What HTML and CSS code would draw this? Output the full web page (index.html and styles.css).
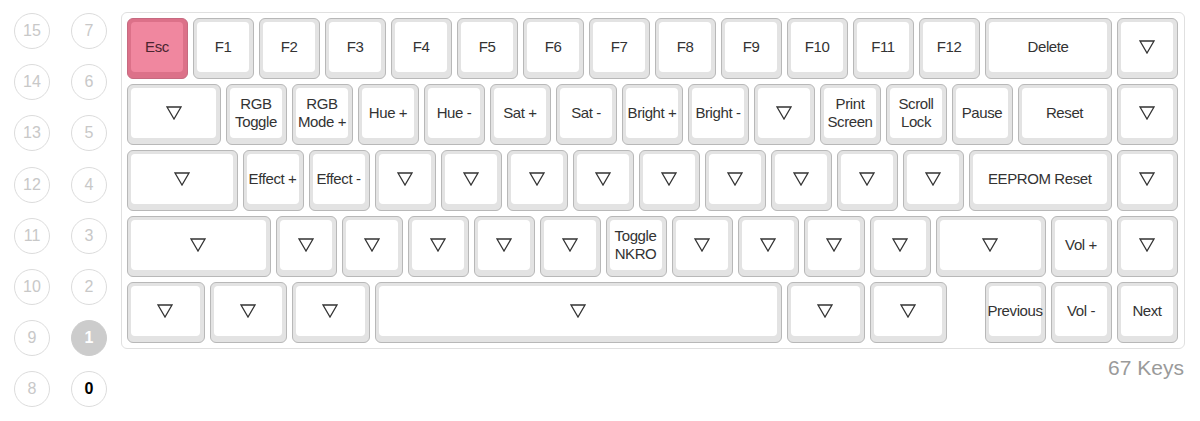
FILE: index.html
```html
<!DOCTYPE html>
<html>
<head>
<meta charset="utf-8">
<link rel="stylesheet" href="styles.css">
</head>
<body>
<div class="page">
  <div class="layers">
    <div class="layer">15</div><div class="layer">7</div>
    <div class="layer">14</div><div class="layer">6</div>
    <div class="layer">13</div><div class="layer">5</div>
    <div class="layer">12</div><div class="layer">4</div>
    <div class="layer">11</div><div class="layer">3</div>
    <div class="layer">10</div><div class="layer">2</div>
    <div class="layer">9</div><div class="layer active">1</div>
    <div class="layer">8</div><div class="layer current">0</div>
  </div>
  <div class="main">
    <div class="keyboard">
      <div class="row">
        <div class="key u1 esc"><div class="face">Esc</div></div>
        <div class="key u1"><div class="face">F1</div></div>
        <div class="key u1"><div class="face">F2</div></div>
        <div class="key u1"><div class="face">F3</div></div>
        <div class="key u1"><div class="face">F4</div></div>
        <div class="key u1"><div class="face">F5</div></div>
        <div class="key u1"><div class="face">F6</div></div>
        <div class="key u1"><div class="face">F7</div></div>
        <div class="key u1"><div class="face">F8</div></div>
        <div class="key u1"><div class="face">F9</div></div>
        <div class="key u1"><div class="face">F10</div></div>
        <div class="key u1"><div class="face">F11</div></div>
        <div class="key u1"><div class="face">F12</div></div>
        <div class="key u2"><div class="face">Delete</div></div>
        <div class="key u1 last"><div class="face"><svg class="tri" viewBox="0 0 16 14"><polygon points="1,1 15,1 8,13"/></svg></div></div>
      </div>
      <div class="row">
        <div class="key u150"><div class="face"><svg class="tri" viewBox="0 0 16 14"><polygon points="1,1 15,1 8,13"/></svg></div></div>
        <div class="key u1"><div class="face">RGB<br>Toggle</div></div>
        <div class="key u1"><div class="face">RGB<br>Mode +</div></div>
        <div class="key u1"><div class="face">Hue +</div></div>
        <div class="key u1"><div class="face">Hue -</div></div>
        <div class="key u1"><div class="face">Sat +</div></div>
        <div class="key u1"><div class="face">Sat -</div></div>
        <div class="key u1"><div class="face">Bright +</div></div>
        <div class="key u1"><div class="face">Bright -</div></div>
        <div class="key u1"><div class="face"><svg class="tri" viewBox="0 0 16 14"><polygon points="1,1 15,1 8,13"/></svg></div></div>
        <div class="key u1"><div class="face">Print<br>Screen</div></div>
        <div class="key u1"><div class="face">Scroll<br>Lock</div></div>
        <div class="key u1"><div class="face">Pause</div></div>
        <div class="key u150"><div class="face">Reset</div></div>
        <div class="key u1 last"><div class="face"><svg class="tri" viewBox="0 0 16 14"><polygon points="1,1 15,1 8,13"/></svg></div></div>
      </div>
      <div class="row">
        <div class="key u175"><div class="face"><svg class="tri" viewBox="0 0 16 14"><polygon points="1,1 15,1 8,13"/></svg></div></div>
        <div class="key u1"><div class="face">Effect +</div></div>
        <div class="key u1"><div class="face">Effect -</div></div>
        <div class="key u1"><div class="face"><svg class="tri" viewBox="0 0 16 14"><polygon points="1,1 15,1 8,13"/></svg></div></div>
        <div class="key u1"><div class="face"><svg class="tri" viewBox="0 0 16 14"><polygon points="1,1 15,1 8,13"/></svg></div></div>
        <div class="key u1"><div class="face"><svg class="tri" viewBox="0 0 16 14"><polygon points="1,1 15,1 8,13"/></svg></div></div>
        <div class="key u1"><div class="face"><svg class="tri" viewBox="0 0 16 14"><polygon points="1,1 15,1 8,13"/></svg></div></div>
        <div class="key u1"><div class="face"><svg class="tri" viewBox="0 0 16 14"><polygon points="1,1 15,1 8,13"/></svg></div></div>
        <div class="key u1"><div class="face"><svg class="tri" viewBox="0 0 16 14"><polygon points="1,1 15,1 8,13"/></svg></div></div>
        <div class="key u1"><div class="face"><svg class="tri" viewBox="0 0 16 14"><polygon points="1,1 15,1 8,13"/></svg></div></div>
        <div class="key u1"><div class="face"><svg class="tri" viewBox="0 0 16 14"><polygon points="1,1 15,1 8,13"/></svg></div></div>
        <div class="key u1"><div class="face"><svg class="tri" viewBox="0 0 16 14"><polygon points="1,1 15,1 8,13"/></svg></div></div>
        <div class="key u225"><div class="face">EEPROM Reset</div></div>
        <div class="key u1 last"><div class="face"><svg class="tri" viewBox="0 0 16 14"><polygon points="1,1 15,1 8,13"/></svg></div></div>
      </div>
      <div class="row">
        <div class="key u225"><div class="face"><svg class="tri" viewBox="0 0 16 14"><polygon points="1,1 15,1 8,13"/></svg></div></div>
        <div class="key u1"><div class="face"><svg class="tri" viewBox="0 0 16 14"><polygon points="1,1 15,1 8,13"/></svg></div></div>
        <div class="key u1"><div class="face"><svg class="tri" viewBox="0 0 16 14"><polygon points="1,1 15,1 8,13"/></svg></div></div>
        <div class="key u1"><div class="face"><svg class="tri" viewBox="0 0 16 14"><polygon points="1,1 15,1 8,13"/></svg></div></div>
        <div class="key u1"><div class="face"><svg class="tri" viewBox="0 0 16 14"><polygon points="1,1 15,1 8,13"/></svg></div></div>
        <div class="key u1"><div class="face"><svg class="tri" viewBox="0 0 16 14"><polygon points="1,1 15,1 8,13"/></svg></div></div>
        <div class="key u1"><div class="face">Toggle<br>NKRO</div></div>
        <div class="key u1"><div class="face"><svg class="tri" viewBox="0 0 16 14"><polygon points="1,1 15,1 8,13"/></svg></div></div>
        <div class="key u1"><div class="face"><svg class="tri" viewBox="0 0 16 14"><polygon points="1,1 15,1 8,13"/></svg></div></div>
        <div class="key u1"><div class="face"><svg class="tri" viewBox="0 0 16 14"><polygon points="1,1 15,1 8,13"/></svg></div></div>
        <div class="key u1"><div class="face"><svg class="tri" viewBox="0 0 16 14"><polygon points="1,1 15,1 8,13"/></svg></div></div>
        <div class="key u175"><div class="face"><svg class="tri" viewBox="0 0 16 14"><polygon points="1,1 15,1 8,13"/></svg></div></div>
        <div class="key u1"><div class="face">Vol +</div></div>
        <div class="key u1 last"><div class="face"><svg class="tri" viewBox="0 0 16 14"><polygon points="1,1 15,1 8,13"/></svg></div></div>
      </div>
      <div class="row">
        <div class="key u125"><div class="face"><svg class="tri" viewBox="0 0 16 14"><polygon points="1,1 15,1 8,13"/></svg></div></div>
        <div class="key u125"><div class="face"><svg class="tri" viewBox="0 0 16 14"><polygon points="1,1 15,1 8,13"/></svg></div></div>
        <div class="key u125"><div class="face"><svg class="tri" viewBox="0 0 16 14"><polygon points="1,1 15,1 8,13"/></svg></div></div>
        <div class="key u625"><div class="face"><svg class="tri" viewBox="0 0 16 14"><polygon points="1,1 15,1 8,13"/></svg></div></div>
        <div class="key u125"><div class="face"><svg class="tri" viewBox="0 0 16 14"><polygon points="1,1 15,1 8,13"/></svg></div></div>
        <div class="key u125"><div class="face"><svg class="tri" viewBox="0 0 16 14"><polygon points="1,1 15,1 8,13"/></svg></div></div>
        <div class="spacer"></div>
        <div class="key u1"><div class="face">Previous</div></div>
        <div class="key u1"><div class="face">Vol -</div></div>
        <div class="key u1 last"><div class="face">Next</div></div>
      </div>
    </div>
    <div class="count">67 Keys</div>
  </div>
</div>
</body>
</html>
```
FILE: styles.css
```css
* { box-sizing: border-box; }
html, body { margin: 0; padding: 0; background: #fff; }
body { font-family: "Liberation Sans", Arial, sans-serif; color: #333; }

.page {
  display: flex;
  align-items: flex-start;
  padding: 12px 15px 0 14px;
  gap: 14px;
}

.layers {
  display: grid;
  grid-template-columns: 36px 36px;
  column-gap: 21px;
  row-gap: 15.2px;
  margin-top: 1px;
}
.layer {
  width: 36px;
  height: 36px;
  border-radius: 50%;
  border: 1px solid #dcdcdc;
  color: #c8c8c8;
  font-size: 16px;
  display: flex;
  align-items: center;
  justify-content: center;
}
.layer.active {
  background: #cccccc;
  border-color: #cccccc;
  color: #fff;
  font-weight: bold;
}
.layer.current {
  color: #000;
  font-weight: bold;
}

.main {
  display: flex;
  flex-direction: column;
  align-items: flex-end;
}

.keyboard {
  border: 1px solid #e0e0e0;
  border-radius: 6px;
  padding: 5px 6px 5px 5px;
  display: flex;
  flex-direction: column;
  gap: 5px;
  background: #fff;
}
.row { display: flex; gap: 5px; }

.key {
  height: 61px;
  border: 1px solid #b8b8b8;
  border-radius: 6px;
  background: #e3e3e3;
  padding: 3px 4px 6px 3px;
  flex: none;
}
.face {
  height: 100%;
  background: #fff;
  border-radius: 4px;
  display: flex;
  align-items: center;
  justify-content: center;
  text-align: center;
  font-size: 15px;
  line-height: 18px;
  color: #333;
  white-space: nowrap;
  letter-spacing: -0.4px;
}
.esc { background: #dc7189; border-color: #c66a80; }
.esc .face { background: #f0879f; color: #4a2530; }

.u1 { width: 61px; }
.u125 { width: 77.5px; }
.u150 { width: 94px; }
.u175 { width: 110.5px; }
.u2 { width: 127px; }
.u225 { width: 143.5px; }
.u625 { width: 407.5px; }
.spacer { width: 28px; flex: none; }

.tri { width: 16px; height: 14px; display: block; }
.tri polygon { fill: none; stroke: #333; stroke-width: 1.3; stroke-linejoin: miter; }

.count {
  margin-top: 7px;
  margin-right: 1px;
  font-size: 21px;
  color: #9a9a9a;
}
```
